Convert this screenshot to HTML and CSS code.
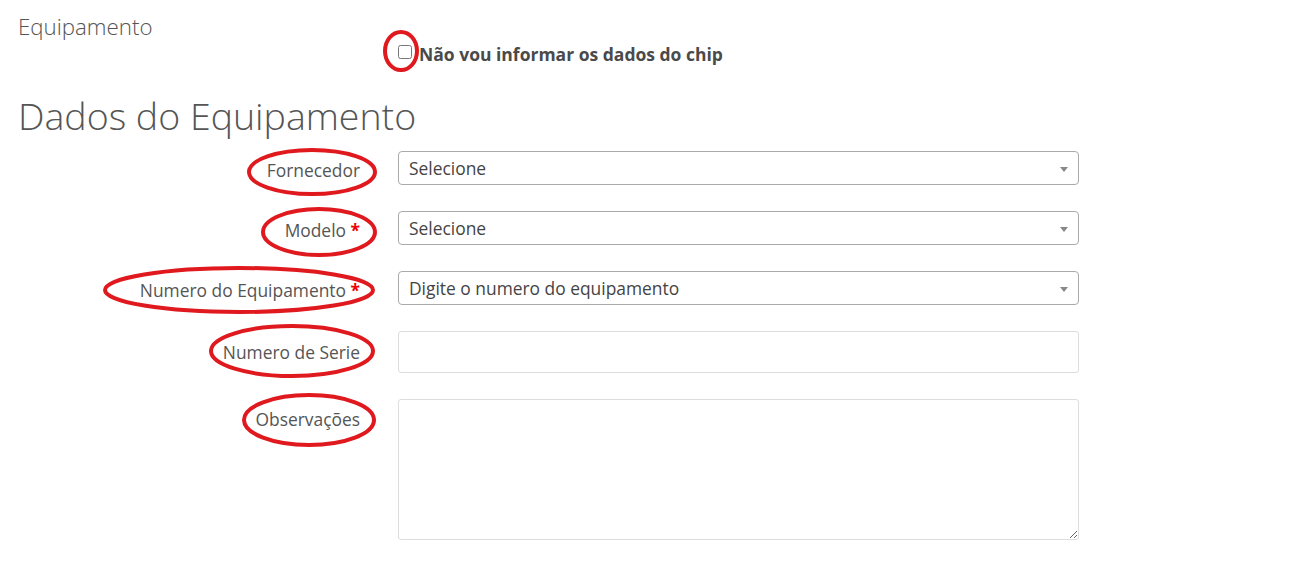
FILE: index.html
```html
<!DOCTYPE html>
<html lang="pt-BR">
<head>
<meta charset="UTF-8">
<meta name="viewport" content="width=device-width, initial-scale=1.0">
<title>Equipamento</title>
<link rel="stylesheet" href="styles.css">
</head>
<body>

<div class="page">
  <div class="page-title">Equipamento</div>

  <div class="chip-check">
    <label><input type="checkbox" class="check"> Não vou informar os dados do chip</label>
  </div>

  <h1 class="section-title">Dados do Equipamento</h1>

  <div class="form">
    <div class="form-row">
      <label class="form-label">Fornecedor</label>
      <div class="select-box"><span>Selecione</span><b class="arrow"></b></div>
    </div>
    <div class="form-row">
      <label class="form-label">Modelo <span class="req">*</span></label>
      <div class="select-box"><span>Selecione</span><b class="arrow"></b></div>
    </div>
    <div class="form-row">
      <label class="form-label">Numero do Equipamento <span class="req">*</span></label>
      <div class="select-box"><span>Digite o numero do equipamento</span><b class="arrow"></b></div>
    </div>
    <div class="form-row">
      <label class="form-label label-input">Numero de Serie</label>
      <input type="text" class="text-input">
    </div>
    <div class="form-row">
      <label class="form-label label-top">Observações</label>
      <textarea class="text-area"></textarea>
    </div>
  </div>
</div>

<!-- red markings drawn over the screenshot -->
<svg class="marks" width="1300" height="581" viewBox="0 0 1300 581">
  <g fill="none" stroke="#e0191e" stroke-width="4">
    <ellipse cx="401" cy="51" rx="16" ry="19"/>
    <ellipse cx="312" cy="172" rx="63" ry="22"/>
    <ellipse cx="319" cy="232" rx="56" ry="23"/>
    <ellipse cx="239" cy="290" rx="134" ry="22"/>
    <ellipse cx="292" cy="351" rx="81" ry="25"/>
    <ellipse cx="309" cy="420" rx="65" ry="25"/>
  </g>
</svg>

</body>
</html>
```

FILE: styles.css
```css
body {
  margin: 0;
  font-family: 'Open Sans', sans-serif;
  color: #555;
  background-color: #fff;
}

.page {
  padding: 12px 0 0 18px;
}

.page-title {
  font-size: 22.3px;
  font-weight: 300;
  line-height: 30px;
  color: #555;
}

.chip-check {
  padding-left: 380px;
  margin-top: 0;
}

.chip-check label {
  display: flex;
  align-items: center;
  font-size: 17.5px;
  font-weight: 700;
  color: #4a4a4a;
  line-height: 24px;
}

.check {
  width: 14px;
  height: 14px;
  margin: 0 7px 5px 0;
}

.section-title {
  font-size: 37.5px;
  font-weight: 300;
  color: #555;
  margin: 25px 0 10px;
  line-height: 50px;
}

.form-row {
  display: flex;
  align-items: center;
  margin-bottom: 26px;
}

.form-label {
  width: 342px;
  text-align: right;
  font-size: 17.4px;
  color: #555;
  margin-right: 38px;
  margin-top: 4px;
}

.label-input {
  margin-top: 0;
}

.label-top {
  align-self: flex-start;
  margin-top: 8px;
}

.req {
  color: #e00;
  font-weight: 700;
}

.select-box {
  position: relative;
  width: 681px;
  height: 34px;
  box-sizing: border-box;
  border: 1px solid #aaa;
  border-radius: 4px;
  padding: 0 10px;
  display: flex;
  align-items: center;
  font-size: 17.4px;
  color: #444;
}

.arrow {
  position: absolute;
  right: 10px;
  top: 15px;
  border-left: 4px solid transparent;
  border-right: 4px solid transparent;
  border-top: 5px solid #888;
}

.text-input {
  width: 681px;
  height: 42px;
  box-sizing: border-box;
  border: 1px solid #ddd;
  border-radius: 3px;
  font-family: inherit;
  font-size: 16px;
}

.text-area {
  width: 681px;
  height: 141px;
  box-sizing: border-box;
  border: 1px solid #ddd;
  border-radius: 3px;
  font-family: inherit;
  font-size: 16px;
  resize: vertical;
}

.marks {
  position: absolute;
  left: 0;
  top: 0;
  pointer-events: none;
}
```
